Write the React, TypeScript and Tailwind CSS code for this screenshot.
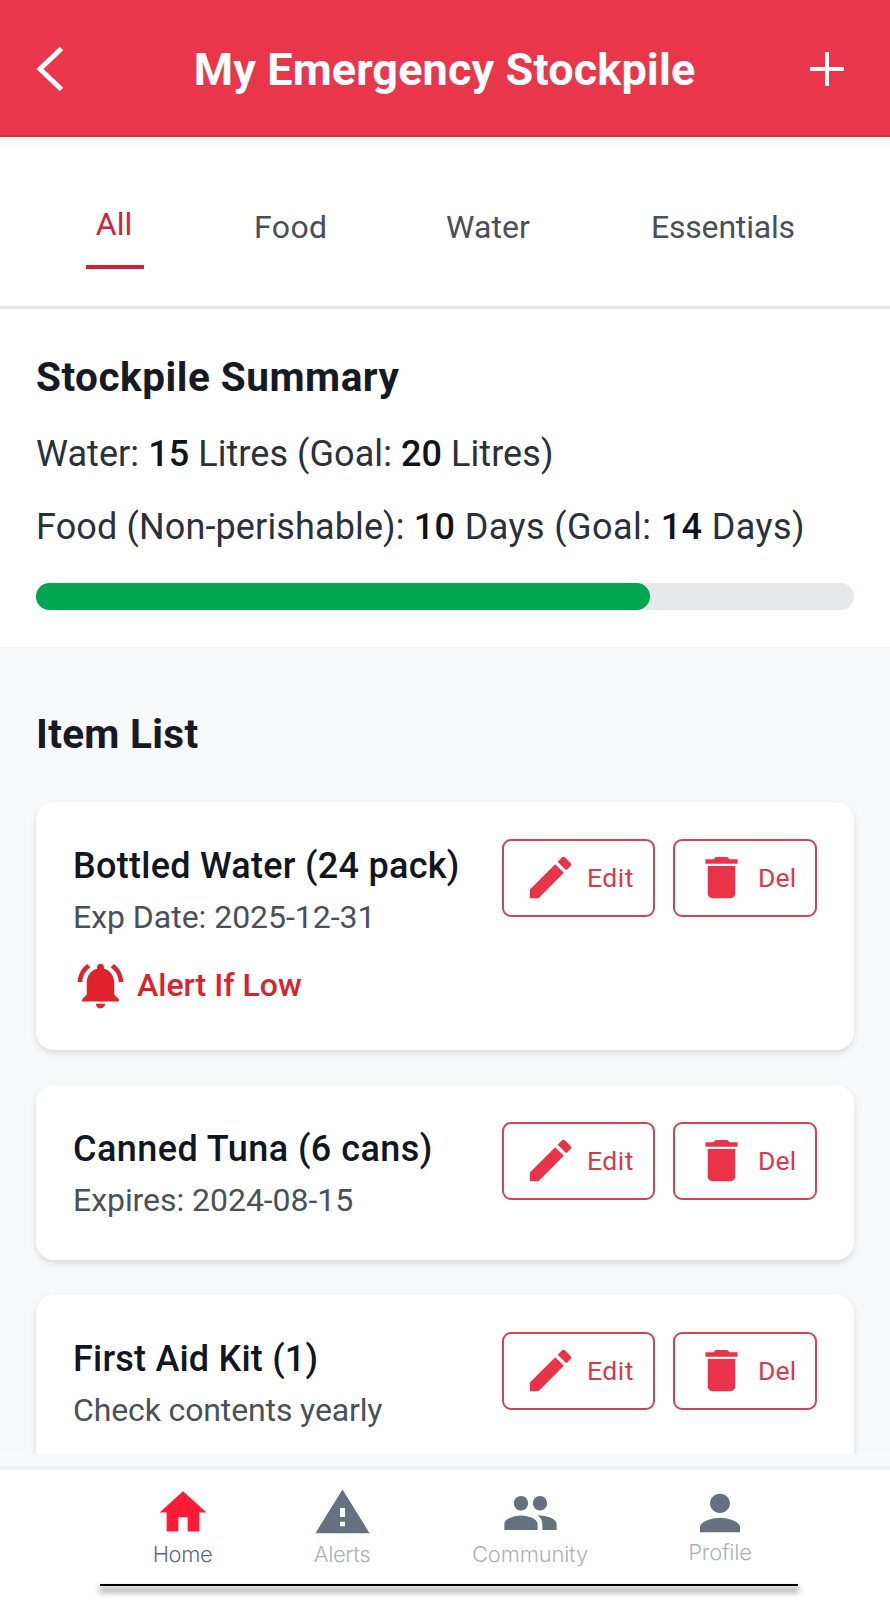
import type { ReactNode } from "react";
import {
  MdDelete,
  MdEdit,
  MdNotificationsActive,
} from "react-icons/md";

type Item = {
  name: string;
  note: string;
  alert?: boolean;
  height: string;
  nameTracking: string;
  noteTracking: string;
};

const items: Item[] = [
  {
    name: "Bottled Water (24 pack)",
    note: "Exp Date: 2025-12-31",
    alert: true,
    height: "h-[248px]",
    nameTracking: "tracking-[0.27px]",
    noteTracking: "tracking-[-0.03px]",
  },
  {
    name: "Canned Tuna (6 cans)",
    note: "Expires: 2024-08-15",
    height: "h-[175px]",
    nameTracking: "tracking-[0.45px]",
    noteTracking: "tracking-[-0.05px]",
  },
  {
    name: "First Aid Kit (1)",
    note: "Check contents yearly",
    height: "h-[248px]",
    nameTracking: "tracking-[0.2px]",
    noteTracking: "tracking-[-0.13px]",
  },
];

function ActionButton({ className, children }: { className: string; children: ReactNode }) {
  return (
    <button
      className={`flex h-[78px] items-center rounded-[9px] border-2 border-[#d04455] text-[26.5px] leading-none text-[#d63a4e] ${className}`}
    >
      {children}
    </button>
  );
}

function ItemCard({ item }: { item: Item }) {
  return (
    <article
      className={`flex shrink-0 justify-between rounded-[18px] bg-white pr-[37px] pl-[37px] shadow-[0_3px_6px_rgba(0,0,0,0.12)] ${item.height}`}
    >
      <div className="flex flex-col whitespace-nowrap pt-[39px]">
        <h3 className={`text-[36px] leading-[50px] font-medium text-[#14161f] ${item.nameTracking}`}>{item.name}</h3>
        <p className={`text-[32px] leading-[52px] text-[#4b5058] ${item.noteTracking}`}>{item.note}</p>
        {item.alert && (
          <div className="mt-[14px] flex items-center text-[#e0222c]">
            <MdNotificationsActive className="size-[55px]" />
            <span className="ml-[9px] text-[32px] leading-[56px] font-medium text-[#d8232e]">Alert If Low</span>
          </div>
        )}
      </div>
      <div className="mt-[37px] flex gap-[18px]">
        <ActionButton className="w-[153px] pl-[19px]">
          <MdEdit className="-mt-[2px] size-[55px] shrink-0 text-[#ea3349]" />
          <span className="ml-[9px] tracking-[0.5px]">Edit</span>
        </ActionButton>
        <ActionButton className="w-[144px] pl-[19px]">
          <MdDelete className="-mt-[2px] size-[55px] shrink-0 text-[#ea3349]" />
          <span className="ml-[9px] tracking-[0.2px]">Del</span>
        </ActionButton>
      </div>
    </article>
  );
}

export default function App() {
  return (
    <div className="flex h-[1602px] w-[890px] flex-col overflow-hidden bg-white font-['Roboto',sans-serif]">
      <header className="flex h-[137px] shrink-0 items-center justify-between border-b-2 border-[#d92d42] bg-[#e9364a] pr-[46px] pl-[36px] text-white">
        <svg className="mt-[2px] h-[46px] w-[28px]" viewBox="0 0 28 46" fill="none" stroke="currentColor" strokeWidth="5">
          <path d="M25.500 2.500L4 23l21.500 20.500" />
        </svg>
        <h1 className="mt-[4px] ml-[15px] text-[45px] leading-[56px] font-bold tracking-[0.12px] whitespace-nowrap">
          My Emergency Stockpile
        </h1>
        <svg className="mt-[2px] h-[34px] w-[34px]" viewBox="0 0 34 34" fill="none" stroke="currentColor" strokeWidth="4">
          <path d="M17 0v34M0 17h34" />
        </svg>
      </header>

      <nav className="flex h-[172px] shrink-0 items-start border-t-[8px] border-b-[3px] border-t-[#fafafd] border-b-[#e6e7e9] pt-[57px] pl-[86px] text-[32px] leading-[50px] text-[#4a4f57]">
        <div className="flex h-[67px] w-[58px] flex-col items-center border-b-4 border-[#d01f3a] text-[#d01f3a]">
          <span className="-mt-[3px] -ml-[2px]">All</span>
        </div>
        <span className="ml-[110px] w-[75px] tracking-[0.4px]">Food</span>
        <span className="ml-[117px] w-[90px] tracking-[0.1px]">Water</span>
        <span className="ml-[115px] tracking-[-0.2px]">Essentials</span>
      </nav>

      <section className="flex h-[338px] shrink-0 flex-col px-[36px] whitespace-nowrap">
        <h2 className="mt-[43px] text-[40.5px] leading-[50px] font-bold tracking-[0.5px] text-[#171923]">
          Stockpile Summary
        </h2>
        <p className="mt-[27px] text-[36px] leading-[50px] tracking-[0.07px] text-[#2c303a]">
          Water: <b className="font-medium text-[#111318]">15</b> Litres (Goal:{" "}
          <b className="font-medium text-[#111318]">20</b> Litres)
        </p>
        <p className="mt-[23px] text-[36px] leading-[50px] tracking-[0.42px] text-[#2c303a]">
          <span className="tracking-[0.13px]">Food (Non-perishable): </span>
          <b className="font-medium text-[#111318]">10</b> Days (Goal:{" "}
          <b className="font-medium text-[#111318]">14</b> Days)
        </p>
        <div className="mt-[31px] h-[27px] shrink-0 rounded-full bg-[#e6e9eb]">
          <div className="h-full w-[614px] rounded-full bg-[#00a650]" />
        </div>
      </section>

      <main className="flex h-[807px] shrink-0 flex-col overflow-hidden bg-[#f7f8fa] px-[36px]">
        <h2 className="mt-[62px] text-[40.5px] leading-[50px] font-bold tracking-[0.3px] text-[#171923]">Item List</h2>
        <div className="mt-[43px] flex flex-col gap-[35px]">
          {items.map((item) => (
            <ItemCard key={item.name} item={item} />
          ))}
        </div>
      </main>

      <footer className="flex h-[148px] shrink-0 flex-col border-t-[12px] border-[#f5fafd] font-['Inter',sans-serif] text-[22px] leading-[28px] font-light tracking-[-0.2px] text-[#adb1b9]">
        <div className="flex h-[118px] shrink-0 items-start border-t-4 border-[#f1f2f7] pl-[122px]">
          <div className="flex w-[121px] flex-col items-center pt-[14px]">
            <svg className="ml-px h-[57px] w-[56px] text-[#ff1a35]" viewBox="0 0 24 24" fill="currentColor" preserveAspectRatio="none">
              <path d="M10 20v-6h4v6h5v-8h3L12 3 2 12h3v8z" />
            </svg>
            <span className="-mt-px tracking-[-0.4px] text-[#5f6b79]">Home</span>
          </div>
          <div className="ml-[39px] flex w-[120px] flex-col items-center pt-[15px]">
            <svg className="h-[55px] w-[59px] text-[#65717f]" viewBox="0 0 24 24" fill="currentColor" preserveAspectRatio="none">
              <path d="M1 21h22L12 2 1 21zm12-3h-2v-2h2v2zm0-4h-2v-4h2v4z" />
            </svg>
            <span className="tracking-[-0.4px]">Alerts</span>
          </div>
          <div className="ml-[58px] flex w-[140px] flex-col items-center pt-[14px]">
            <svg className="h-[58px] w-[57px] text-[#65717f]" viewBox="0 0 24 24" fill="currentColor" preserveAspectRatio="none">
              <path d="M16 11c1.660 0 2.990-1.340 2.990-3S17.660 5 16 5c-1.660 0-3 1.340-3 3s1.340 3 3 3zm-8 0c1.660 0 2.990-1.340 2.990-3S9.660 5 8 5C6.340 5 5 6.340 5 8s1.340 3 3 3zm0 2c-2.330 0-7 1.170-7 3.500V19h14v-2.500c0-2.330-4.670-3.500-7-3.500zm8 0c-.29 0-.62.020-.97.050 1.160.84 1.970 1.970 1.970 3.450V19h6v-2.500c0-2.330-4.670-3.500-7-3.500z" />
            </svg>
            <span className="-mt-[2px]">Community</span>
          </div>
          <div className="ml-[60px] flex w-[120px] flex-col items-center pt-[14px]">
            <svg className="h-[58px] w-[60px] text-[#65717f]" viewBox="0 0 24 24" fill="currentColor" preserveAspectRatio="none">
              <path d="M12 12c2.210 0 4-1.790 4-4s-1.790-4-4-4-4 1.790-4 4 1.790 4 4 4zm0 2c-2.670 0-8 1.340-8 4v2h16v-2c0-2.660-5.330-4-8-4z" />
            </svg>
            <span className="-mt-[4px]">Profile</span>
          </div>
        </div>
        <div className="ml-[100px] h-[2px] w-[698px] shrink-0 bg-black shadow-[0_5px_6px_1px_rgba(0,0,0,0.45)]" />
      </footer>
    </div>
  );
}
